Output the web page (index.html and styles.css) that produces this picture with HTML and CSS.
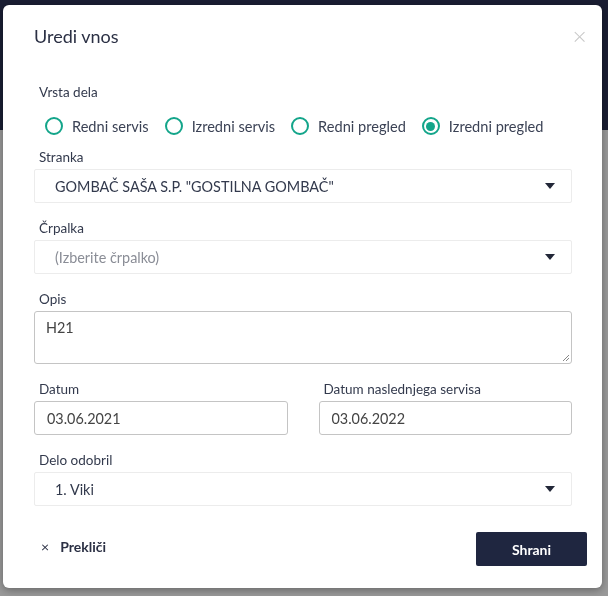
FILE: index.html
```html
<!DOCTYPE html>
<html lang="sl">
<head>
<meta charset="utf-8">
<title>Uredi vnos</title>
<link rel="stylesheet" href="styles.css">
</head>
<body>
<div class="page">
  <header class="topbar"></header>
  <main class="backdrop-content"></main>
</div>
<div class="overlay"></div>
<div class="modal">
  <div class="modal-header">
    <h2 class="modal-title">Uredi vnos</h2>
    <button class="close">×</button>
  </div>
  <div class="modal-body">
    <div class="field">
      <label class="lbl">Vrsta dela</label>
      <div class="radios">
        <span class="radio"><span class="dot"></span>Redni servis</span>
        <span class="radio"><span class="dot"></span>Izredni servis</span>
        <span class="radio"><span class="dot"></span>Redni pregled</span>
        <span class="radio checked"><span class="dot"></span>Izredni pregled</span>
      </div>
    </div>
    <div class="field">
      <label class="lbl">Stranka</label>
      <div class="select"><span>GOMBAČ SAŠA S.P. "GOSTILNA GOMBAČ"</span><span class="caret"></span></div>
    </div>
    <div class="field">
      <label class="lbl">Črpalka</label>
      <div class="select"><span class="ph">(Izberite črpalko)</span><span class="caret"></span></div>
    </div>
    <div class="field">
      <label class="lbl">Opis</label>
      <div class="textarea">H21<svg class="grip" width="8" height="8" viewBox="0 0 8 8"><path d="M7 1L1 7M7 4L4 7" stroke="#888" stroke-width="1"/></svg></div>
    </div>
    <div class="row">
      <div class="field">
        <label class="lbl">Datum</label>
        <div class="input">03.06.2021</div>
      </div>
      <div class="field">
        <label class="lbl">Datum naslednjega servisa</label>
        <div class="input">03.06.2022</div>
      </div>
    </div>
    <div class="field">
      <label class="lbl">Delo odobril</label>
      <div class="select"><span>1. Viki</span><span class="caret"></span></div>
    </div>
  </div>
  <div class="modal-footer">
    <button class="cancel"><span class="x">×</span>Prekliči</button>
    <button class="save">Shrani</button>
  </div>
</div>
</body>
</html>
```
FILE: styles.css
```css
* { box-sizing: border-box; }
html, body { margin: 0; padding: 0; }
body {
  width: 608px;
  height: 596px;
  overflow: hidden;
  font-family: "Lato", "Noto Sans", sans-serif;
  background: #fff;
}
.page { height: 596px; }
.topbar { height: 130px; background: #1a1e33; }
.backdrop-content { height: 466px; background: #fff; }
.overlay {
  position: fixed; inset: 130px 0 0 0;
  background: rgba(0,0,0,0.4);
}
.modal {
  position: fixed;
  left: 3px; top: 5px;
  width: 599px; height: 583px;
  background: #fff;
  border-radius: 6px;
  box-shadow: 0 2px 8px rgba(0,0,0,0.35);
  display: flex;
  flex-direction: column;
}
.modal-header {
  display: flex;
  justify-content: space-between;
  align-items: center;
  padding: 10px 14px 0 31px;
  height: 52px;
}
.modal-title {
  margin: 0;
  font-size: 18px;
  font-weight: 400;
  color: #2b3044;
}
.close {
  border: 0; background: none; padding: 0;
  font-size: 20px; color: #c8c8c8;
  font-family: "DejaVu Sans", sans-serif;
  font-weight: 300;
  line-height: 1;
}
.modal-body {
  padding: 26px 30px 0 31px;
}
.field { display: flex; flex-direction: column; }
.lbl {
  font-size: 13.5px;
  color: #333a4d;
  padding-left: 5px;
  line-height: 18px;
  margin-bottom: 3px;
}
.radios {
  display: flex;
  padding-left: 11px;
  height: 30px;
  align-items: center;
  margin-bottom: 7px;
  margin-top: 7px;
}
.radio {
  display: flex; align-items: center;
  font-size: 14.6px; color: #3b4255;
  margin-right: 16px;
}
.dot {
  width: 18px; height: 18px;
  border: 2px solid #13a58a;
  border-radius: 50%;
  margin-right: 9px;
  position: relative;
}
.radio.checked .dot::after {
  content: ""; position: absolute;
  left: 2.5px; top: 2.5px; width: 9px; height: 9px;
  border-radius: 50%; background: #13a58a;
}
.select {
  height: 34px;
  border: 1px solid #ececec;
  border-radius: 2px;
  display: flex; align-items: center; justify-content: space-between;
  padding: 0 16px 0 20px;
  font-size: 14.4px; color: #333a4d;
  margin-bottom: 16px;
}
.ph { color: #8a8d96; }
.caret {
  width: 0; height: 0;
  border-left: 5px solid transparent;
  border-right: 5px solid transparent;
  border-top: 6px solid #222738;
}
.textarea {
  position: relative;
  height: 53px;
  border: 1px solid #c4c4c4;
  border-radius: 3px;
  padding: 7px 11px;
  font-size: 14.4px; color: #444;
  margin-bottom: 16px;
}
.grip { position: absolute; right: 1px; bottom: 1px; }
.row { display: grid; grid-template-columns: 1fr 1fr; column-gap: 31px; }
.input {
  height: 34px;
  border: 1px solid #c4c4c4;
  border-radius: 3px;
  display: flex; align-items: center;
  padding: 0 12px;
  font-size: 14.4px; color: #444;
  margin-bottom: 16px;
}
.modal-footer {
  display: flex; justify-content: space-between; align-items: center;
  padding: 10px 15px 0 38px;
}
.cancel {
  border: 0; background: none; padding: 0 0 6px 0;
  font-family: inherit; font-size: 14px; font-weight: 700; color: #2b3044;
  display: flex; align-items: center;
}
.cancel .x { font-weight: 400; margin-right: 11px; font-size: 14px; }
.save {
  width: 111px; height: 34px;
  border: 0; border-radius: 2px;
  background: #1f2640;
  color: #fff;
  font-family: inherit; font-weight: 700; font-size: 14px;
}
```
